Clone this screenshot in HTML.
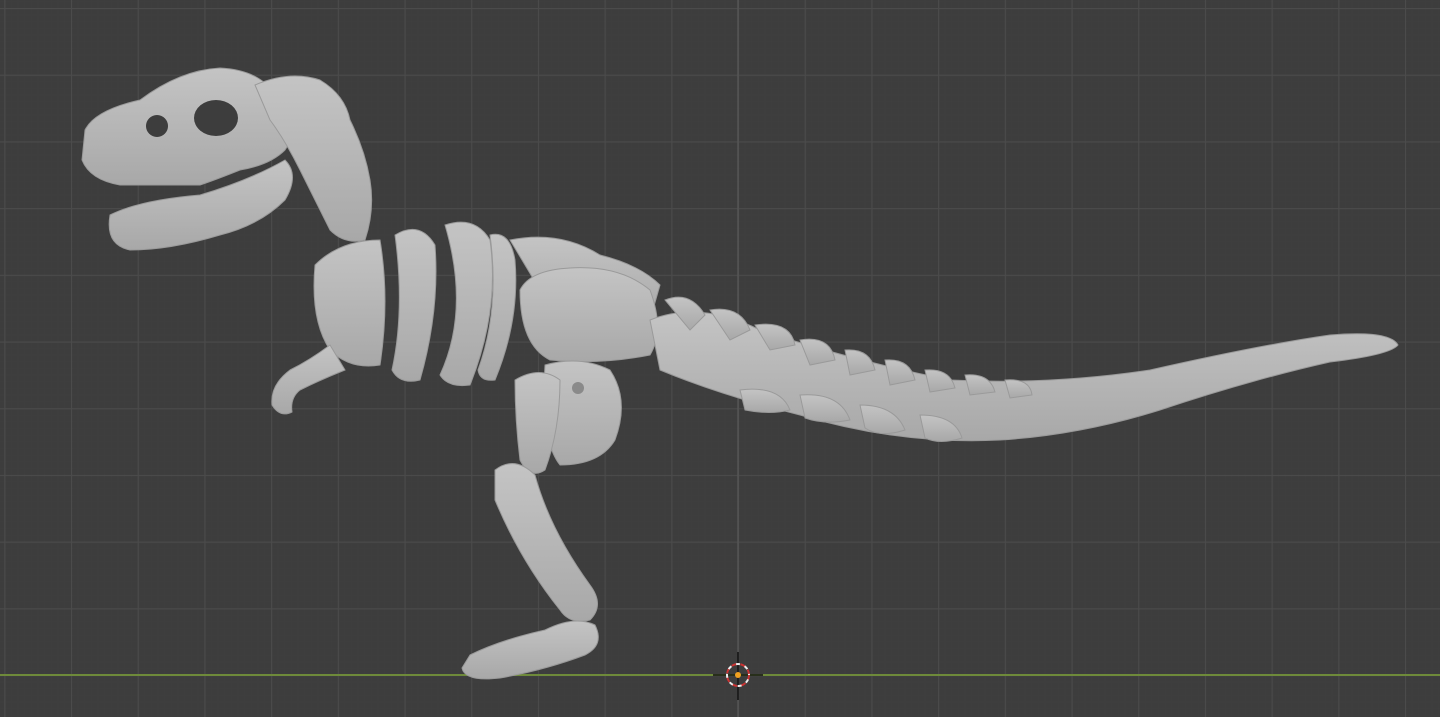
<!DOCTYPE html>
<html><head><meta charset="utf-8"><style>
html,body{margin:0;padding:0;background:#3d3d3d;overflow:hidden}
svg{display:block}
</style></head><body>
<svg width="1440" height="717" viewBox="0 0 1440 717" xmlns="http://www.w3.org/2000/svg">
<defs>
<pattern id="minor" x="4.3" y="8" width="6.67" height="6.67" patternUnits="userSpaceOnUse">
<path d="M0 0H6.67M0 0V6.67" stroke="#3f3f3f" stroke-width="1" fill="none"/>
</pattern>
<pattern id="major" x="4.3" y="8" width="66.7" height="66.7" patternUnits="userSpaceOnUse">
<path d="M0 0.5H66.7M0.5 0V66.7" stroke="#4b4b4b" stroke-width="1.2" fill="none"/>
</pattern>
<linearGradient id="bone" x1="0" y1="0" x2="0" y2="1">
<stop offset="0" stop-color="#c4c4c4"/><stop offset="1" stop-color="#a8a8a8"/>
</linearGradient>
</defs>
<rect width="1440" height="717" fill="#3d3d3d"/>
<rect width="1440" height="717" fill="url(#minor)"/>
<rect width="1440" height="717" fill="url(#major)"/>
<line x1="738" y1="0" x2="738" y2="717" stroke="#555" stroke-width="1.5"/>
<line x1="0" y1="675" x2="1440" y2="675" stroke="#6e8a3a" stroke-width="2"/>

<g fill="url(#bone)" stroke="#9a9a9a" stroke-width="1">
<path d="M85 130 Q95 110 140 100 Q180 70 220 68 Q260 70 275 95 Q300 130 285 150 Q270 165 240 170 Q215 180 200 185 Q160 185 120 185 Q90 180 82 160 Z"/>
<path d="M110 215 Q140 200 200 195 Q250 180 285 160 Q300 175 285 200 Q260 225 220 235 Q170 250 130 250 Q105 245 110 215 Z"/>
<path d="M255 85 Q290 70 320 80 Q345 95 350 120 Q365 150 370 180 Q375 210 365 240 Q345 245 330 230 Q315 200 300 170 Q285 140 270 120 Z"/>
<path d="M315 265 Q340 240 380 240 Q390 300 380 365 Q350 370 330 350 Q310 320 315 265 Z"/>
<path d="M395 235 Q420 220 435 245 Q440 310 420 380 Q400 385 392 370 Q405 310 395 235 Z"/>
<path d="M445 225 Q475 215 490 240 Q500 310 470 385 Q448 388 440 375 Q470 310 445 225 Z"/>
<path d="M490 235 Q510 230 515 260 Q520 320 495 380 Q480 382 478 370 Q500 310 490 235 Z"/>
<path d="M330 345 Q310 360 290 370 Q270 385 272 405 Q280 418 292 412 Q290 398 300 390 Q320 380 345 370 Z"/>
<path d="M510 240 Q560 230 600 255 Q640 265 660 285 L650 320 Q600 300 540 290 Z"/>
<path d="M520 290 Q530 270 570 268 Q620 265 650 290 Q665 330 650 355 Q600 365 550 360 Q520 345 520 290 Z"/>
<path d="M545 365 Q580 355 610 370 Q630 400 615 440 Q600 465 560 465 Q540 440 545 365 Z"/>
<path d="M515 380 Q540 365 560 380 Q560 430 545 470 Q530 480 520 460 Q515 420 515 380 Z"/>
<path d="M495 470 Q515 455 535 475 Q550 530 590 585 Q605 605 590 620 Q570 625 560 610 Q520 560 495 500 Z"/>
<path d="M470 655 Q500 640 545 630 Q575 615 595 625 Q605 645 585 655 Q545 670 500 678 Q465 682 462 668 Z"/>
<path d="M650 320 Q700 300 760 330 Q850 360 950 380 Q1050 385 1150 370 Q1260 345 1330 335 Q1390 330 1398 345 Q1390 355 1330 362 Q1250 380 1160 410 Q1080 435 1000 440 Q900 445 800 415 Q720 395 660 370 Z"/>
<path d="M665 300 Q690 290 705 315 L690 330 Z"/>
<path d="M710 310 Q740 305 750 330 L730 340 Z"/>
<path d="M755 325 Q790 320 795 345 L770 350 Z"/>
<path d="M800 340 Q830 335 835 360 L810 365 Z"/>
<path d="M845 350 Q870 348 875 370 L850 375 Z"/>
<path d="M885 360 Q910 358 915 380 L890 385 Z"/>
<path d="M925 370 Q950 368 955 388 L930 392 Z"/>
<path d="M965 375 Q990 373 995 392 L970 395 Z"/>
<path d="M1005 380 Q1030 378 1032 395 L1010 398 Z"/>
<path d="M740 390 Q780 385 790 410 Q770 415 745 410 Z"/>
<path d="M800 395 Q840 392 850 420 Q825 425 805 418 Z"/>
<path d="M860 405 Q895 405 905 430 Q880 438 865 428 Z"/>
<path d="M920 415 Q955 415 962 438 Q940 445 925 438 Z"/>
</g>
<ellipse cx="216" cy="118" rx="22" ry="18" fill="#3d3d3d"/>
<ellipse cx="157" cy="126" rx="11" ry="11" fill="#3d3d3d"/>
<circle cx="578" cy="388" r="6" fill="#8a8a8a"/>

<g>
<line x1="738" y1="652" x2="738" y2="700" stroke="#111" stroke-width="1.5"/>
<line x1="713" y1="675" x2="763" y2="675" stroke="#111" stroke-width="1.5"/>
<circle cx="738" cy="675" r="11" fill="none" stroke="#c33" stroke-width="2" stroke-dasharray="5 4"/>
<circle cx="738" cy="675" r="11" fill="none" stroke="#eee" stroke-width="2" stroke-dasharray="4 5" stroke-dashoffset="4.5"/>
<circle cx="738" cy="675" r="3" fill="#f0a020"/>
</g>
</svg>
</body></html>
